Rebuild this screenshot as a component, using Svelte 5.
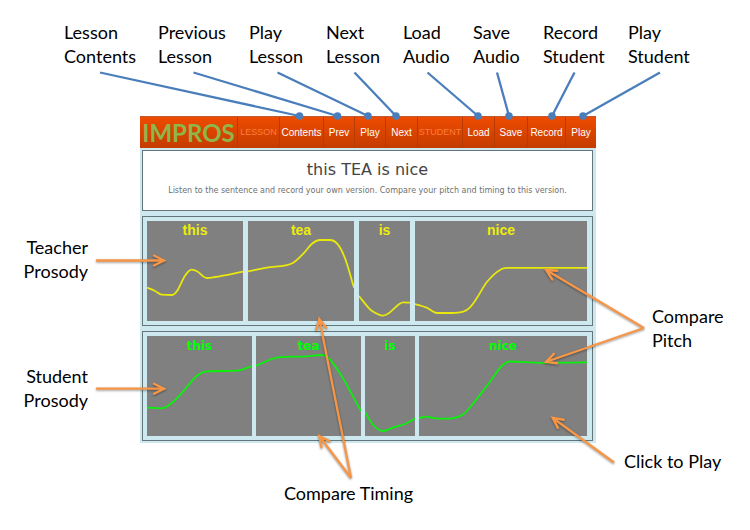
<script>
  const topLabels = [
    ['Lesson', 'Contents'],
    ['Previous', 'Lesson'],
    ['Play', 'Lesson'],
    ['Next', 'Lesson'],
    ['Load', 'Audio'],
    ['Save', 'Audio'],
    ['Record', 'Student'],
    ['Play', 'Student'],
  ];

  const nav = [
    { text: 'LESSON', heading: true },
    { text: 'Contents' },
    { text: 'Prev' },
    { text: 'Play' },
    { text: 'Next' },
    { text: 'STUDENT', heading: true },
    { text: 'Load' },
    { text: 'Save' },
    { text: 'Record' },
    { text: 'Play' },
  ];

  // Callout leader lines: x1, y1, x2, y2
  const leaders = [
    [100, 72.5, 299.5, 116],
    [193.5, 72.5, 337.5, 116],
    [277.5, 72.5, 368, 116],
    [354.5, 72.5, 396, 116],
    [427.5, 72.5, 478, 116],
    [497, 72.5, 509, 116],
    [574.5, 72.5, 552, 116],
    [660, 72.5, 583, 116],
  ];

  const arrows = [
    'M96 260.5L163 260.5',
    'M96 388.7L163 388.7',
    'M644 328L547 270.5',
    'M644 328L547 361.5',
    'M614 462.5L553.5 418.5',
    'M351 478L319.5 320',
    'M351 478L320 437',
  ];

  // Each word spans x..x+w on the shared time axis
  const tracks = [
    {
      name: 'teacher',
      top: 221,
      words: [
        { text: 'this', x: 147, w: 96, pts: [[147, 287.5], [155, 291], [161.7, 294.7], [172.3, 295], [177, 291], [185, 275.7], [191.7, 269.7], [197, 271.3], [206.7, 278], [215, 277], [243, 271.7]] },
        { text: 'tea', x: 248, w: 106, pts: [[248, 271.3], [266.7, 267.7], [293.3, 262.7], [303.3, 253.7], [311.7, 244], [320, 240], [330, 240], [338.3, 245], [345, 258.3], [354, 287.7]] },
        { text: 'is', x: 359, w: 51, pts: [[359, 296], [370, 309.3], [375, 312.7], [382.7, 315.7], [388.3, 313.5], [403.3, 302.3], [410, 302.7]] },
        { text: 'nice', x: 415, w: 172, pts: [[415, 304], [426.7, 307.7], [436.7, 313], [451.7, 313], [463.3, 311.7], [470, 307.3], [476.7, 298.3], [486.7, 282.3], [501.7, 269], [508.3, 267.8], [587, 267.8]] },
      ],
    },
    {
      name: 'student',
      top: 336,
      words: [
        { text: 'this', x: 147, w: 105, pts: [[147, 407.7], [161.7, 408.3], [173.3, 401.7], [185, 389.3], [196.7, 376], [206.7, 371.3], [236.7, 370.7], [252, 366]] },
        { text: 'tea', x: 256, w: 105, pts: [[256, 365.7], [278.3, 357.3], [306.7, 356.3], [321.7, 355], [328.3, 357.7], [340, 373.3], [361, 411]] },
        { text: 'is', x: 365, w: 50, pts: [[365, 412], [373.3, 425], [383.3, 431], [393.3, 427.3], [405, 424], [415, 418.5]] },
        { text: 'nice', x: 419, w: 168, pts: [[419, 418.3], [425, 416.7], [438.3, 418.7], [451.7, 418.3], [463.3, 414.3], [473.3, 403.3], [490, 381.7], [501.7, 366], [510, 361.5], [540, 362.8], [587, 362.4]] },
      ],
    },
  ];

  // Smooth pitch curve through the points, without overshoot
  function curve(p) {
    const slopes = p.slice(1).map((q, i) => (q[1] - p[i][1]) / (q[0] - p[i][0]));
    const tangents = p.map((_, i) => {
      const s1 = slopes[i - 1];
      const s2 = slopes[i];
      if (s1 === undefined) return s2;
      if (s2 === undefined) return s1;
      if (s1 * s2 <= 0) return 0;
      const limit = 3 * Math.min(Math.abs(s1), Math.abs(s2));
      return Math.sign(s1) * Math.min(Math.abs(s1 + s2) / 2, limit);
    });
    let d = `M${p[0][0]} ${p[0][1]}`;
    for (let i = 0; i < p.length - 1; i++) {
      const b = p[i];
      const c = p[i + 1];
      const third = (c[0] - b[0]) / 3;
      d += `C${b[0] + third} ${b[1] + third * tangents[i]} ${c[0] - third} ${c[1] - third * tangents[i + 1]} ${c[0]} ${c[1]}`;
    }
    return d;
  }
</script>

<main class="figure">
  <div class="top-labels">
    {#each topLabels as [first, second]}
      <div>{first}<br />{second}</div>
    {/each}
  </div>

  <div class="middle">
    <div class="side left">
      <div>Teacher<br />Prosody</div>
      <div>Student<br />Prosody</div>
    </div>

    <section class="app">
      <nav>
        <div class="logo">IMPROS</div>
        {#each nav as item}
          {#if item.heading}
            <span class="heading">{item.text}</span>
          {:else}
            <button type="button">{item.text}</button>
          {/if}
        {/each}
      </nav>
      <div class="panels">
        <header class="panel intro">
          <h1>this TEA is nice</h1>
          <p>Listen to the sentence and record your own version. Compare your pitch and timing to this version.</p>
        </header>
        {#each tracks as track}
          <div class="panel track {track.name}">
            {#each track.words as word}
              <button type="button" class="word" style="flex-grow: {word.w}">
                <svg viewBox="{word.x} {track.top} {word.w} 100" preserveAspectRatio="none" aria-hidden="true">
                  <path d={curve(word.pts)} />
                </svg>
                <span>{word.text}</span>
              </button>
            {/each}
          </div>
        {/each}
      </div>
    </section>

    <div class="side right">
      <div>Compare<br />Pitch</div>
    </div>
  </div>

  <div class="bottom-labels">
    <div class="timing">Compare Timing</div>
    <div class="click">Click to Play</div>
  </div>

  <svg class="callouts" viewBox="0 0 750 530" preserveAspectRatio="none" aria-hidden="true">
    <defs>
      <marker id="head" markerUnits="userSpaceOnUse" markerWidth="16" markerHeight="16" refX="12" refY="8" orient="auto">
        <path d="M3 3L13 8L3 13" fill="none" stroke="#f79646" stroke-width="2.4" stroke-linecap="round" stroke-linejoin="miter" />
      </marker>
    </defs>
    <g class="leaders">
      {#each leaders as [x1, y1, x2, y2]}
        <line {x1} {y1} {x2} {y2} />
        <circle cx={x2} cy={y2} r="3.8" />
      {/each}
    </g>
    <g class="arrows">
      {#each arrows as d}
        <path {d} marker-end="url(#head)" />
      {/each}
    </g>
  </svg>
</main>

<style>
  :global(body) {
    margin: 0;
    background: #fff;
  }

  .figure {
    position: relative;
    box-sizing: border-box;
    min-height: 530px;
    font: 18px/24px Lato, "Liberation Sans", sans-serif;
    color: #000;
  }

  .top-labels {
    display: grid;
    grid-template-columns: 64fr 94fr 91fr 77fr 77fr 70fr 70fr 85fr 122fr;
    box-sizing: border-box;
    height: 116px;
    padding-top: 20px;
  }

  .top-labels > div {
    min-width: 0;
    white-space: nowrap;
  }

  .top-labels > div:first-child {
    grid-column: 2;
  }

  .middle {
    display: grid;
    grid-template-columns: 140fr 456fr 154fr;
  }

  .side {
    min-width: 0;
  }

  .left {
    display: flex;
    flex-direction: column;
    gap: 81px;
    padding: 119px 52px 0 0;
    text-align: right;
  }

  .right {
    padding: 188px 0 0 56px;
  }

  .app {
    min-width: 0;
  }

  nav {
    display: grid;
    grid-template-columns: 97fr 42fr 44fr 31fr 31fr 32fr 45fr 32fr 33fr 38fr 31fr;
    height: 32px;
    background: linear-gradient(#ee4b00, #c43c00);
    border-top: 1px solid #c05a30;
    box-sizing: border-box;
    font: 10px/31px "Liberation Sans", Arial, sans-serif;
  }

  nav > * {
    display: flex;
    align-items: center;
    justify-content: center;
    min-width: 0;
    box-sizing: border-box;
    white-space: nowrap;
  }

  nav > * + * {
    border: 0;
    border-left: 1px solid #b83a04;
  }

  nav button {
    margin: 0;
    padding: 0;
    background: none;
    color: #fff;
    font: inherit;
    cursor: pointer;
  }

  .heading {
    color: #ff7d3c;
    font-size: 9px;
  }

  .logo {
    color: #8fb54b;
    font: bold 24px/31px Lato, sans-serif;
  }

  .panels {
    display: flex;
    flex-direction: column;
    gap: 5px;
    padding: 2px 3px 2px 2px;
    background: #cde8ee;
  }

  .panel {
    box-sizing: border-box;
    border: 1px solid #62767c;
  }

  .intro {
    height: 61px;
    padding-top: 9px;
    background: #fff;
    text-align: center;
    font-family: "DejaVu Sans", Verdana, sans-serif;
  }

  h1 {
    margin: 0;
    font-size: 16px;
    line-height: 20px;
    font-weight: 400;
    color: #444;
  }

  p {
    margin: 5px 0 0;
    font-size: 8px;
    line-height: 12px;
    color: #707070;
    white-space: nowrap;
  }

  .track {
    display: flex;
    gap: 5px;
    height: 110px;
    padding: 4px 5px 4px 4px;
  }

  .student {
    gap: 4px;
  }

  .word {
    position: relative;
    flex: 1 1 0;
    min-width: 0;
    margin: 0;
    padding: 0;
    border: 0;
    background: #808080;
    font: bold 14px/18px "Liberation Sans", Arial, sans-serif;
    color: #eded0c;
    cursor: pointer;
    display: flex;
    justify-content: center;
    align-items: flex-start;
  }

  .word svg {
    position: absolute;
    inset: 0;
    width: 100%;
    height: 100%;
  }

  .word path {
    fill: none;
    stroke: #e8e80c;
    stroke-width: 1.8;
  }

  .student .word {
    color: #0f0;
    font-family: "DejaVu Sans", Verdana, sans-serif;
    font-size: 12px;
    line-height: 20px;
  }

  .student .word path {
    stroke: #0bf00b;
  }

  .bottom-labels {
    display: grid;
    grid-template-columns: 284fr 340fr 126fr;
    padding-top: 6px;
  }

  .timing {
    grid-column: 2;
    padding-top: 32px;
  }

  .click {
    grid-column: 3;
    white-space: nowrap;
  }

  .callouts {
    position: absolute;
    inset: 0;
    width: 100%;
    height: 530px;
    pointer-events: none;
  }

  .leaders {
    stroke: #4a7ebb;
    stroke-width: 2.3;
    fill: #4a7ebb;
  }

  .leaders circle {
    stroke: none;
  }

  .arrows {
    fill: none;
    stroke: #f79646;
    stroke-width: 2.3;
    filter: drop-shadow(0 1px 1px rgba(0, 0, 0, 0.4));
  }
</style>
